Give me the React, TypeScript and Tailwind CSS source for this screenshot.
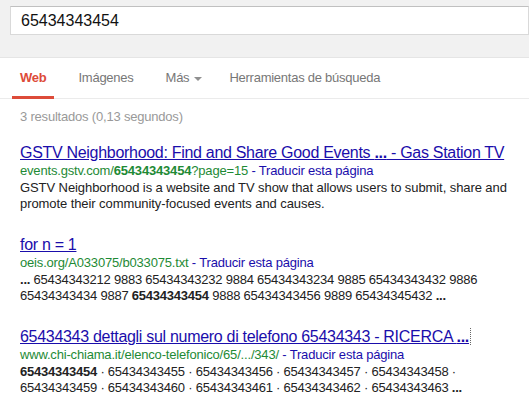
import React from 'react';

const font = { fontFamily: '"Liberation Sans", Arial, sans-serif' };

const Tab = ({ label, active, caret }: { label: string; active?: boolean; caret?: boolean }) => (
  <div
    className={
      active
        ? 'relative flex h-full items-center px-2 font-bold text-[#dd4b39]'
        : caret
          ? 'relative flex h-full items-center pl-2 pr-[3px] text-[#777777]'
          : 'relative flex h-full items-center px-2 text-[#777777]'
    }
  >
    <span className="tracking-[-0.25px]">{label}</span>
    {caret && (
      <span className="ml-[5px] mt-[1px] h-0 w-0 border-x-[4px] border-t-[4px] border-x-transparent border-t-[#909090]" />
    )}
    {active && <div className="absolute bottom-[-1px] left-0 right-0 h-[3px] bg-[#dd4b39]" />}
  </div>
);

const Bold = ({ children }: { children: React.ReactNode }) => <b className="font-bold">{children}</b>;

// digit runs render a touch narrower than Liberation's default advance
const Num = ({ children }: { children: React.ReactNode }) => (
  <span className="tracking-[-0.23px]">{children}</span>
);

const Result = ({
  title,
  url,
  snippet,
  outlined,
}: {
  title: React.ReactNode;
  url: React.ReactNode;
  snippet: React.ReactNode;
  outlined?: boolean;
}) => (
  <div className="mb-[24px]">
    <div className="whitespace-nowrap text-[16px] leading-[18px] tracking-[-0.3px] text-[#1a0dab]">
      <a className={outlined ? 'underline border-r border-dotted border-[#666] pr-[1px]' : 'underline'}>{title}</a>
    </div>
    <div className="text-[13px] leading-[18px] tracking-[-0.18px]">
      <span className="text-[#1e8a35]">{url}</span>
      <span className="text-[#1a0dab]"> - Traducir esta página</span>
    </div>
    <div className="whitespace-nowrap text-[13px] leading-[16px] text-[#222222]">{snippet}</div>
  </div>
);

export default function App() {
  return (
    <div className="h-[411px] w-[529px] overflow-hidden bg-white" style={font}>
      {/* search header */}
      <div className="h-[58px] border-b border-[#e5e5e5] bg-[#f1f1f1] pl-[10px] pt-[6px]">
        <div className="flex h-[29px] items-center border border-[#d9d9d9] border-t-[#c0c0c0] bg-white pl-[10px] text-[16px] text-[#111]">
          65434343454
        </div>
      </div>

      {/* tabs */}
      <div className="flex h-[41px] items-center gap-4 border-b border-[#ebebeb] pl-[12px] text-[13px]">
        <Tab label="Web" active />
        <Tab label="Imágenes" />
        <Tab label="Más" caret />
        <Tab label="Herramientas de búsqueda" />
      </div>

      <div className="pl-[20px] pt-[10px]">
        <div className="text-[13px] leading-[16px] tracking-[-0.2px] text-[#999999]">3 resultados (0,13 segundos)</div>

        <div className="mt-[19px]">
          <Result
            title={
              <>
                GSTV Neighborhood: Find and Share Good Events <b>...</b> - Gas Station TV
              </>
            }
            url={
              <>
                events.gstv.com/<Bold>65434343454</Bold>?page=15
              </>
            }
            snippet={
              <span className="tracking-[-0.08px]">
                GSTV Neighborhood is a website and TV show that allows users to submit, share and
                <br />
                promote their community-focused events and causes.
              </span>
            }
          />
          <Result
            title="for n = 1"
            url="oeis.org/A033075/b033075.txt"
            snippet={
              <Num>
                <Bold>...</Bold> 65434343212 9883 65434343232 9884 65434343234 9885 65434343432 9886
                <br />
                65434343434 9887 <Bold>65434343454</Bold> 9888 65434343456 9889 65434345432 <Bold>...</Bold>
              </Num>
            }
          />
          <Result
            outlined
            title={
              <>
                65434343 dettagli sul numero di telefono 65434343 - RICERCA <b>...</b>
              </>
            }
            url="www.chi-chiama.it/elenco-telefonico/65/.../343/"
            snippet={
              <Num>
                <Bold>65434343454</Bold> · 65434343455 · 65434343456 · 65434343457 · 65434343458 ·
                <br />
                65434343459 · 65434343460 · 65434343461 · 65434343462 · 65434343463 <Bold>...</Bold>
              </Num>
            }
          />
        </div>
      </div>
    </div>
  );
}
